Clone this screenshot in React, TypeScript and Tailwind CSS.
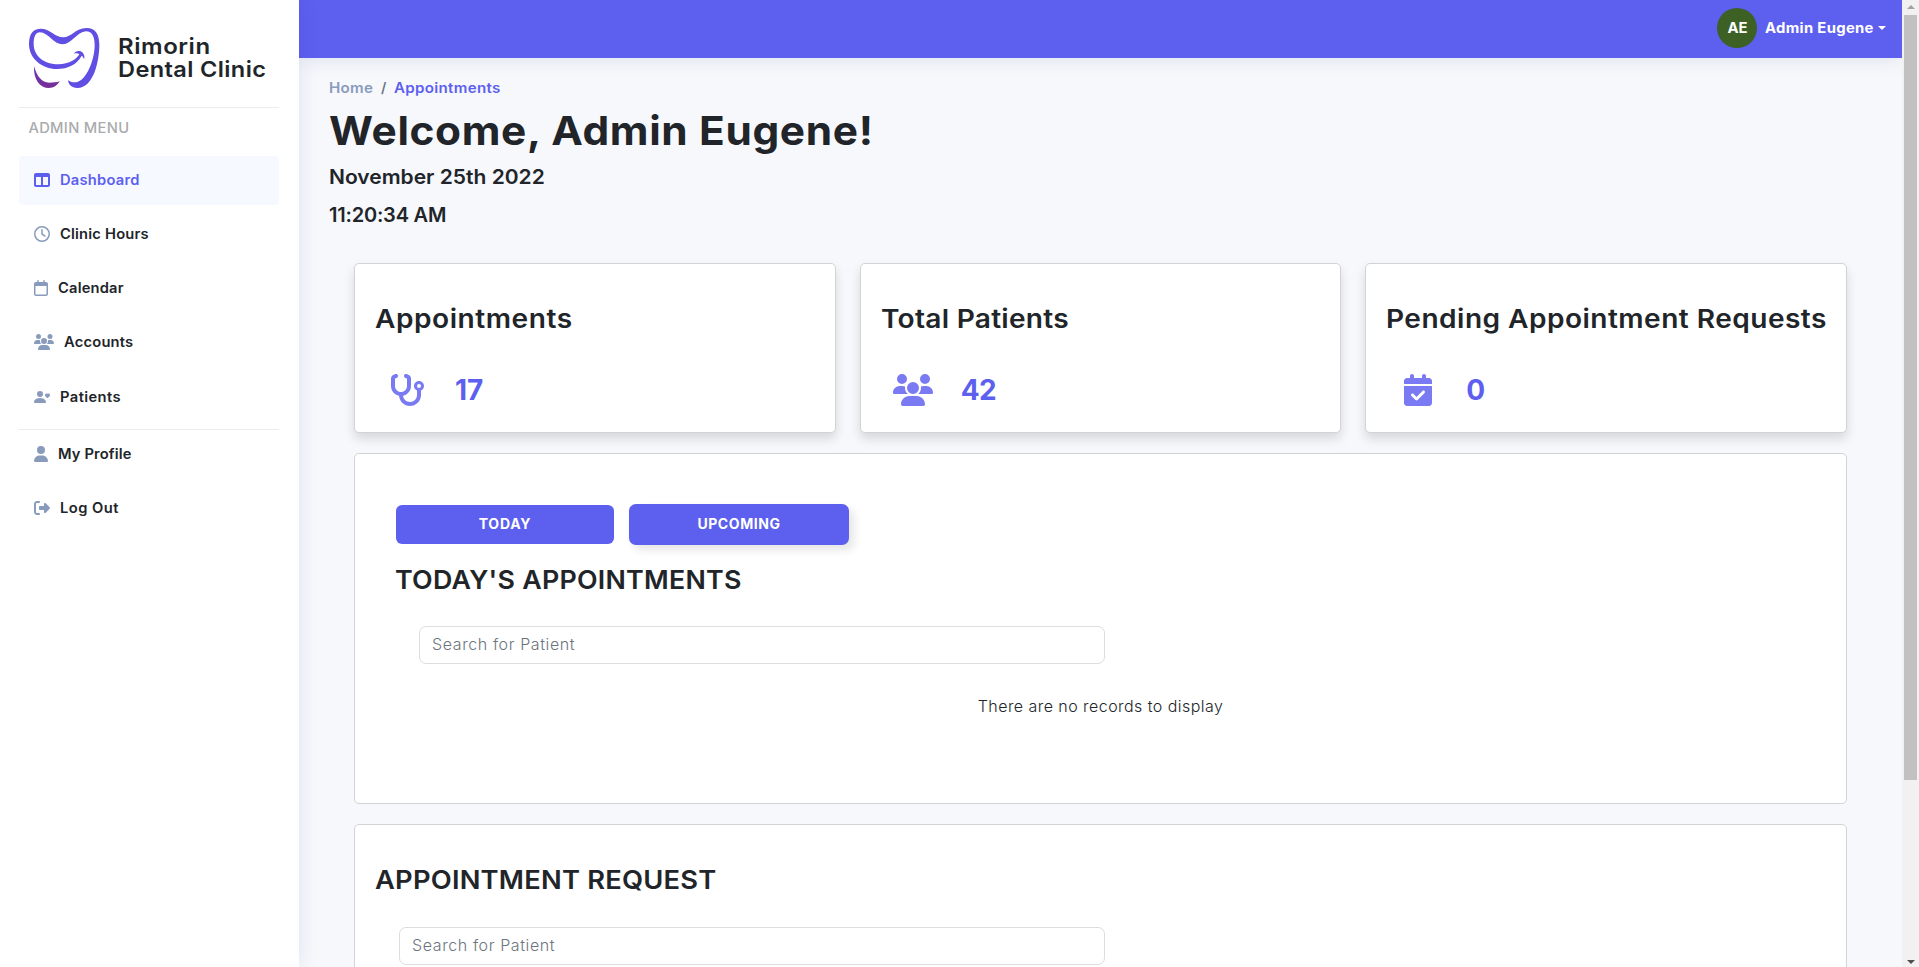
import React from 'react';
import {
  FaTableColumns,
  FaRegClock,
  FaRegCalendar,
  FaUsers,
  FaUser,
  FaRightFromBracket,
  FaStethoscope,
  FaCalendarCheck,
} from 'react-icons/fa6';
import { BsPersonHeart } from 'react-icons/bs';

function Logo() {
  return (
    <svg viewBox="0 0 270 225" className="h-[75px] w-[90px] shrink-0">
      <defs>
        <linearGradient id="tooth-shade" x1="0" y1="0" x2="0" y2="1">
          <stop offset="0" stopColor="#6a35b8" />
          <stop offset="1" stopColor="#772f96" />
        </linearGradient>
      </defs>
      <path
        fill="#614fe4"
        d="M27 72C27 40 40 26 62 26C90 26 105 52 130 52C155 52 165 24 200 24C228 24 238 45 238 75C238 120 222 204 172 204C155 204 143 192 145 180C150 187 162 188 172 186C200 178 224 120 224 75C224 48 215 34 198 34C170 36 155 73 128 73C100 73 85 37 60 37C47 37 41 50 41 72C41 110 75 133 115 133C148 133 170 117 178 103C174 99 168 99 162 101C166 92 180 91 187 97C193 103 195 112 192 118C190 112 188 109 185 107C172 132 145 147 110 147C65 147 27 115 27 72Z"
      />
      <path fill="url(#tooth-shade)" d="M42 138C50 168 65 188 88 188C100 188 110 187 119 184C112 197 100 204 87 204C60 204 40 180 42 138Z" />
    </svg>
  );
}

type NavItemProps = {
  icon: React.ReactNode;
  label: string;
  text: string;
  active?: boolean;
};

function NavItem({ icon, label, text, active }: NavItemProps) {
  return (
    <a
      className={`flex h-[49px] items-center gap-[10px] rounded px-[15px] pb-[2px] text-sm font-semibold ${
        active ? 'bg-[#f6f9ff] text-[#5d5fef]' : 'text-[#212529]'
      }`}
    >
      <span className={active ? 'text-[#5d5fef]' : 'text-[#899bbd]'}>{icon}</span>
      <span className={`origin-left scale-x-105 ${text}`}>{label}</span>
    </a>
  );
}

function Sidebar() {
  return (
    <aside className="z-10 flex w-[299px] shrink-0 flex-col bg-white pr-5 pl-[19px] shadow-[0_0_20px_rgba(1,41,112,0.1)]">
      <div className="flex h-[107px] items-start pt-5 pl-px">
        <Logo />
        <div className="pt-[15px] pl-[8px] text-[22px] leading-[23px] font-semibold whitespace-nowrap text-[#212529]">
          <div className="origin-left scale-x-[1.09] tracking-[0.5px]">Rimorin</div>
          <div className="origin-left scale-x-[1.07] tracking-[0.36px]">Dental Clinic</div>
        </div>
      </div>
      <div className="h-px bg-[#ebeced]" />
      <div className="mt-[9px] origin-left scale-x-105 pl-[9px] text-sm leading-[21px] font-medium tracking-[0.3px] text-[#a9abad]">
        ADMIN MENU
      </div>
      <nav className="mt-[18px] flex flex-col gap-[5px]">
        <NavItem active icon={<FaTableColumns size={16} />} label="Dashboard" text="tracking-[0.22px]" />
        <NavItem icon={<FaRegClock size={16} />} label="Clinic Hours" text="tracking-[0.19px]" />
        <NavItem icon={<FaRegCalendar className="h-4 w-[14px]" />} label="Calendar" text="tracking-[0.18px]" />
        <NavItem icon={<FaUsers className="h-4 w-5" />} label="Accounts" text="tracking-[0.2px]" />
        <div className="pt-px">
          <NavItem icon={<BsPersonHeart size={16} />} label="Patients" text="tracking-[0.4px]" />
        </div>
      </nav>
      <div className="mt-[7px] h-px bg-[#ebeced]" />
      <nav className="flex flex-col gap-[5px]">
        <NavItem icon={<FaUser className="h-4 w-[14px]" />} label="My Profile" text="tracking-[0.14px]" />
        <NavItem icon={<FaRightFromBracket size={16} />} label="Log Out" text="tracking-[0.45px]" />
      </nav>
    </aside>
  );
}

function TopBar() {
  return (
    <header className="flex h-[58px] shrink-0 items-center justify-end bg-[#5d5fef] pr-4 text-sm font-bold text-white shadow-[0_2px_20px_rgba(1,41,112,0.1)]">
      <div className="mb-[2px] flex h-10 w-10 items-center justify-center rounded-full bg-[#3d6124]">
        <span className="scale-x-[1.06]">AE</span>
      </div>
      <span className="mb-[2px] ml-2 w-[110px] origin-left scale-x-[1.06] tracking-[0.3px] whitespace-nowrap">Admin Eugene</span>
      <span className="mb-[3px] ml-[3px] border-x-4 border-t-4 border-x-transparent border-t-white" />
    </header>
  );
}

type StatProps = {
  title: string;
  titleClass: string;
  icon: React.ReactNode;
  iconClass: string;
  value: string;
  valueClass: string;
};

function StatCard({ title, titleClass, icon, iconClass, value, valueClass }: StatProps) {
  return (
    <section className="h-[170px] min-w-0 flex-1 rounded-[5px] border border-[#d2d3d4] bg-white pt-[39px] pl-[20px] whitespace-nowrap shadow-[0_6px_11px_rgba(0,0,0,0.13)]">
      <h3 className={`w-max origin-left scale-x-[1.08] text-[26px] leading-8 font-semibold ${titleClass}`}>{title}</h3>
      <div className="mt-[39px] flex h-8 items-center">
        <span className={`text-[#7a7bf3] ${iconClass}`}>{icon}</span>
        <span className={`text-[28px] leading-8 font-bold text-[#5d5fef] ${valueClass}`}>{value}</span>
      </div>
    </section>
  );
}

function SearchBox({ className }: { className: string }) {
  return (
    <input
      placeholder="Search for Patient"
      className={`block h-[38px] rounded-[7px] border border-[#dcdddf] bg-white px-3 pb-[2px] text-base font-[350] tracking-[0.6px] placeholder:text-[#6c757d] ${className}`}
    />
  );
}

function Scrollbar() {
  return (
    <div className="flex w-[17px] shrink-0 flex-col items-center bg-[#f1f1f1]">
      <div className="flex h-[15px] items-center pb-px">
        <span className="border-x-4 border-b-4 border-x-transparent border-b-[#a3a3a3]" />
      </div>
      <div className="h-[765px] w-[13px] bg-[#c1c1c1]" />
      <div className="mt-auto flex h-[11px] items-center">
        <span className="border-x-4 border-t-4 border-x-transparent border-t-[#505050]" />
      </div>
    </div>
  );
}

export default function App() {
  return (
    <div className="flex h-[967px] w-full overflow-hidden bg-[#f6f8fc] font-[Inter,sans-serif] text-[#212529]">
      <Sidebar />
      <div className="flex min-w-0 flex-1 flex-col">
        <TopBar />
        <main className="pr-[55px] pl-[30px]">
          <div className="flex pt-5 text-sm leading-5 font-semibold">
            <span className="w-[52px] origin-left scale-x-[1.08] tracking-[0.25px] text-[#899bbd]">Home</span>
            <span className="w-[13px] text-[#6c757d]">/</span>
            <span className="origin-left scale-x-[1.08] tracking-[0.28px] text-[#5d5fef]">Appointments</span>
          </div>
          <h1 className="mt-[9px] w-max origin-left scale-x-[1.06] text-[40px] leading-[48px] font-bold tracking-[0.6px]">
            Welcome, Admin Eugene!
          </h1>
          <h5 className="mt-[10px] w-max origin-left scale-x-105 text-xl leading-6 font-semibold">November 25th 2022</h5>
          <h5 className="mt-[14px] text-xl leading-6 font-semibold tracking-[-0.2px]">11:20:34 AM</h5>

          <div className="mt-[36px] ml-[25px] flex flex-col">
            <div className="flex gap-6">
              <StatCard
                title="Appointments"
                titleClass="tracking-[0.5px]"
                icon={<FaStethoscope className="h-8 w-9" />}
                iconClass="ml-[14px] w-[66px]"
                value="17"
                valueClass=""
              />
              <StatCard
                title="Total Patients"
                titleClass="tracking-[0.25px]"
                icon={<FaUsers className="h-8 w-10" />}
                iconClass="ml-[12px] w-[68px]"
                value="42"
                valueClass="tracking-[-0.5px]"
              />
              <StatCard
                title="Pending Appointment Requests"
                titleClass="tracking-[0.43px]"
                icon={<FaCalendarCheck className="h-8 w-7" />}
                iconClass="ml-[18px] w-[62px]"
                value="0"
                valueClass=""
              />
            </div>

            <section className="mt-5 h-[351px] rounded-[5px] border border-[#d2d3d4] bg-white px-[40px] pt-[50px]">
              <div className="flex items-center gap-[15px] pl-px text-sm font-bold text-white">
                <button className="h-[39px] w-[218px] rounded-[6px] bg-[#5d5fef] pb-[2px] tracking-[0.77px]">TODAY</button>
                <button className="h-[41px] w-[220px] rounded-[7px] bg-[#5d5fef] pb-[2px] tracking-[0.57px] shadow-[5px_5px_10px_rgba(0,0,0,0.1)]">
                  UPCOMING
                </button>
              </div>
              <h3 className="mt-[19px] w-max origin-left scale-x-[1.03] text-[26px] leading-8 font-semibold tracking-[0.25px]">
                TODAY'S APPOINTMENTS
              </h3>
              <SearchBox className="mt-[30px] ml-6 w-[686px]" />
              <p className="mt-[30px] text-center text-base leading-6 font-[350] tracking-[0.45px]">There are no records to display</p>
            </section>

            <section className="mt-5 h-[351px] rounded-[5px] border border-[#d2d3d4] bg-white px-[20px] pt-[39px]">
              <h3 className="w-max origin-left scale-x-105 text-[26px] leading-8 font-semibold tracking-[0.2px]">APPOINTMENT REQUEST</h3>
              <SearchBox className="mt-[31px] ml-6 w-[706px]" />
            </section>
          </div>
        </main>
      </div>
      <Scrollbar />
    </div>
  );
}
